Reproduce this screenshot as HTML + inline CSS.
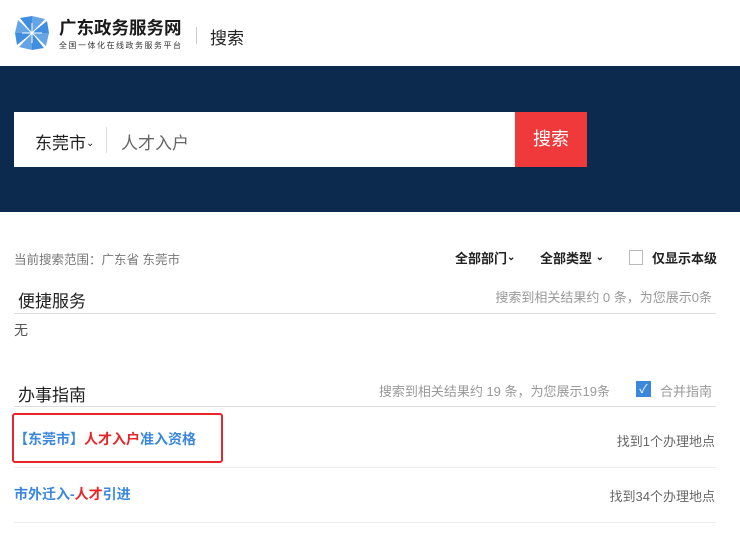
<!DOCTYPE html>
<html><head><meta charset="utf-8"><style>
*{margin:0;padding:0;box-sizing:border-box}
body{width:740px;height:533px;overflow:hidden;background:#fff;font-family:"Liberation Sans","Noto Sans CJK SC",sans-serif;position:relative;color:#333}
.a{position:absolute;white-space:nowrap}
</style></head><body>
<svg class="a" style="left:14px;top:15px" width="36" height="36" viewBox="0 0 36 36">
<g fill="#3f8ee0">
<polygon points="18,18 6,3 18,1"/>
<polygon points="18,18 33,6 35,18"/>
<polygon points="18,18 30,33 18,35"/>
<polygon points="18,18 3,30 1,18"/>
<polygon points="18,18 18,1 31,4" opacity=".8"/>
<polygon points="18,18 35,18 32,31" opacity=".8"/>
<polygon points="18,18 18,35 5,32" opacity=".8"/>
<polygon points="18,18 1,18 4,5" opacity=".8"/>
</g>
<g stroke="#fff" stroke-width="1"><line x1="18" y1="8" x2="18" y2="28"/><line x1="8" y1="18" x2="28" y2="18"/><line x1="11" y1="11" x2="25" y2="25"/><line x1="25" y1="11" x2="11" y2="25"/></g>
</svg>
<div class="a" style="left:59px;top:15px;font-size:17.5px;font-weight:bold;color:#1a1a1a">广东政务服务网</div>
<div class="a" style="left:59px;top:40px;font-size:8px;color:#333;letter-spacing:1.5px">全国一体化在线政务服务平台</div>
<div class="a" style="left:196px;top:27px;width:1px;height:17px;background:#ccc"></div>
<div class="a" style="left:210px;top:24px;font-size:17px;color:#222">搜索</div>
<div class="a" style="left:0;top:66px;width:740px;height:146px;background:#0b2a4e"></div>
<div class="a" style="left:14px;top:112px;width:501px;height:55px;background:#fff"></div>
<div class="a" style="left:35px;top:129px;font-size:17px;color:#222">东莞市<span style="font-size:10px;vertical-align:3px">⌄</span></div>
<div class="a" style="left:106px;top:127px;width:1px;height:26px;background:#ddd"></div>
<div class="a" style="left:121px;top:129px;font-size:17px;color:#666">人才入户</div>
<div class="a" style="left:515px;top:112px;width:72px;height:55px;background:#f0393b;color:#fff;font-size:18px;text-align:center;line-height:55px">搜索</div>
<div class="a" style="left:14px;top:249px;font-size:12.5px;color:#777">当前搜索范围：广东省 东莞市</div>
<div class="a" style="left:455px;top:248px;font-size:13px;color:#222;font-weight:bold">全部部门<span style="font-size:10px;vertical-align:3px">⌄</span></div>
<div class="a" style="left:540px;top:248px;font-size:13px;color:#222;font-weight:bold">全部类型 <span style="font-size:10px;vertical-align:3px">⌄</span></div>
<div class="a" style="left:629px;top:250px;width:14px;height:15px;border:1px solid #bbb"></div>
<div class="a" style="left:652px;top:248px;font-size:13px;color:#222;font-weight:bold">仅显示本级</div>
<div class="a" style="left:18px;top:287px;font-size:17px;color:#222">便捷服务</div>
<div class="a" style="right:28px;top:287px;font-size:13px;color:#999">搜索到相关结果约 0 条，为您展示0条</div>
<div class="a" style="left:14px;top:313px;width:702px;height:1px;background:#ddd"></div>
<div class="a" style="left:14px;top:320px;font-size:14px;color:#555">无</div>
<div class="a" style="left:18px;top:381px;font-size:17px;color:#222">办事指南</div>
<div class="a" style="right:130px;top:381px;font-size:13px;color:#999">搜索到相关结果约 19 条，为您展示19条</div>
<div class="a" style="left:636px;top:381px;width:15px;height:16px;background:#3a87dd;color:#fff;font-size:12px;text-align:center;line-height:16px">✓</div>
<div class="a" style="right:28px;top:381px;font-size:13px;color:#999">合并指南</div>
<div class="a" style="left:14px;top:406px;width:702px;height:1px;background:#ddd"></div>
<div class="a" style="left:12px;top:413px;width:211px;height:50px;border:2px solid #e8262a;border-radius:3px"></div>
<div class="a" style="left:14px;top:429px;font-size:14px;color:#3a87dd;font-weight:bold">【东莞市】<span style="color:#e8262a">人才入户</span>准入资格</div>
<div class="a" style="right:25px;top:431px;font-size:13px;color:#666">找到1个办理地点</div>
<div class="a" style="left:14px;top:467px;width:702px;height:1px;background:#eee"></div>
<div class="a" style="left:14px;top:484px;font-size:14px;color:#3a87dd;font-weight:bold">市外迁入-<span style="color:#e8262a">人才</span>引进</div>
<div class="a" style="right:25px;top:486px;font-size:13px;color:#666">找到34个办理地点</div>
<div class="a" style="left:14px;top:522px;width:702px;height:1px;background:#eee"></div>
</body></html>
